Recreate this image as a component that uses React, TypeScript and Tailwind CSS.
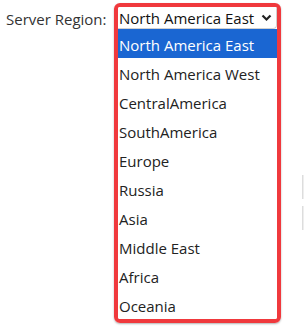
import React from "react";

const options = [
  "North America East",
  "North America West",
  "CentralAmerica",
  "SouthAmerica",
  "Europe",
  "Russia",
  "Asia",
  "Middle East",
  "Africa",
  "Oceania",
];

export default function App() {
  return (
    <div
      className="relative w-[304px] h-[327px] bg-white overflow-hidden"
      style={{ fontFamily: '"Open Sans", "Noto Sans", sans-serif' }}
    >
      <div className="flex items-start pt-[3px] pl-[6px]">
        <div className="text-[15px] leading-[20px] text-[#333] mt-[6px] w-[108px]">Server Region:</div>
        <div className="w-[167px] h-[320px] border-4 border-[#f0393d] rounded-[6px] shadow-[0_1px_2px_rgba(0,0,0,0.3)] flex flex-col overflow-hidden">
          <div className="h-[23px] flex items-center justify-between bg-white border-b border-r border-[#d0d0d0] rounded-br-[4px] pl-[1px] pr-[4px] pt-[1px]">
            <span className="text-[15px] text-[#111] leading-none">North America East</span>
            <svg width="11" height="8" viewBox="0 0 11 8">
              <path d="M1.5 1.5 L5.5 5.5 L9.5 1.5" fill="none" stroke="#222" strokeWidth="2.2" />
            </svg>
          </div>
          <div className="flex flex-col">
            {options.map((o, i) => (
              <div
                key={o}
                className={
                  "h-[29px] flex items-center pl-[1px] pt-[3px] text-[15px] " +
                  (i === 0 ? "bg-[#1a66d2] text-white" : "bg-white text-[#222]")
                }
              >
                {o}
              </div>
            ))}
          </div>
        </div>
      </div>
      <div className="absolute left-[302px] top-[175px] w-[4px] h-[24px] bg-[#eeeeee] border-l border-[#dddddd]" />
      <div className="absolute left-[302px] top-[206px] w-[4px] h-[24px] bg-[#eeeeee] border-l border-[#dddddd]" />
    </div>
  );
}
